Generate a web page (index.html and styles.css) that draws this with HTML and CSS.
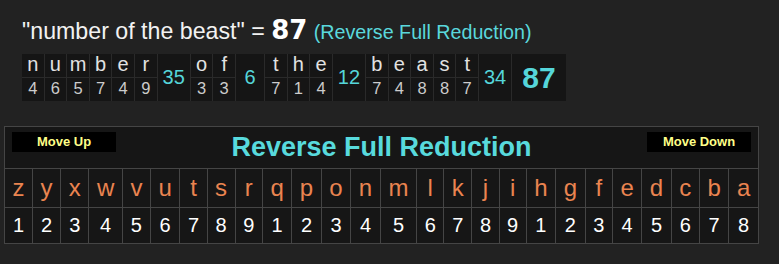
FILE: index.html
```html
<!DOCTYPE html>
<html>
<head>
<meta charset="utf-8">
<link rel="stylesheet" href="styles.css">
</head>
<body>
<div class="summary">
  <div class="phrase"><span class="words">"number of the beast" = </span><span class="big">87</span> <span class="cipher">(Reverse Full Reduction)</span></div>
  <table class="breakdown">
    <tr>
      <td class="l">n</td><td class="l">u</td><td class="l">m</td><td class="l">b</td><td class="l">e</td><td class="l">r</td>
      <td class="sum" rowspan="2">35</td>
      <td class="l">o</td><td class="l">f</td>
      <td class="sum" rowspan="2">6</td>
      <td class="l">t</td><td class="l">h</td><td class="l">e</td>
      <td class="sum" rowspan="2">12</td>
      <td class="l">b</td><td class="l">e</td><td class="l">a</td><td class="l">s</td><td class="l">t</td>
      <td class="sum" rowspan="2">34</td>
      <td class="total" rowspan="2">87</td>
    </tr>
    <tr>
      <td class="v">4</td><td class="v">6</td><td class="v">5</td><td class="v">7</td><td class="v">4</td><td class="v">9</td>
      <td class="v">3</td><td class="v">3</td>
      <td class="v">7</td><td class="v">1</td><td class="v">4</td>
      <td class="v">7</td><td class="v">4</td><td class="v">8</td><td class="v">8</td><td class="v">7</td>
    </tr>
  </table>
</div>
<table class="chart">
  <tr>
    <td class="head" colspan="26">
      <div class="headbar">
        <button class="move left">Move Up</button>
        <span class="title">Reverse Full Reduction</span>
        <button class="move right">Move Down</button>
      </div>
    </td>
  </tr>
  <tr class="letters">
    <td>z</td><td>y</td><td>x</td><td>w</td><td>v</td><td>u</td><td>t</td><td>s</td><td>r</td><td>q</td><td>p</td><td>o</td><td>n</td><td>m</td><td>l</td><td>k</td><td>j</td><td>i</td><td>h</td><td>g</td><td>f</td><td>e</td><td>d</td><td>c</td><td>b</td><td>a</td>
  </tr>
  <tr class="nums">
    <td>1</td><td>2</td><td>3</td><td>4</td><td>5</td><td>6</td><td>7</td><td>8</td><td>9</td><td>1</td><td>2</td><td>3</td><td>4</td><td>5</td><td>6</td><td>7</td><td>8</td><td>9</td><td>1</td><td>2</td><td>3</td><td>4</td><td>5</td><td>6</td><td>7</td><td>8</td>
  </tr>
</table>
</body>
</html>
```

FILE: styles.css
```css
html, body {
  margin: 0;
  padding: 0;
  background: #222222;
  font-family: "Liberation Sans", Arial, sans-serif;
}

.summary {
  padding: 15px 0 0 22px;
}

.phrase {
  line-height: 30px;
  font-size: 23.2px;
  color: #f2f2f2;
  white-space: nowrap;
}

.phrase .big {
  font-family: "DejaVu Sans", "Liberation Sans", sans-serif;
  font-weight: bold;
  font-size: 26px;
  color: #ffffff;
}

.phrase .cipher {
  font-size: 19.7px;
  color: #5ad8dc;
}

.breakdown {
  margin-top: 7px;
  border-collapse: collapse;
  border: hidden;
  background: #151515;
}

.breakdown td {
  border: 1px solid #2a2a2a;
  padding: 0;
  text-align: center;
}

.breakdown .l {
  width: 21.6px;
  font-size: 20px;
  line-height: 20px;
  padding-bottom: 3px;
  color: #e2e2e2;
}

.breakdown .v {
  font-size: 16.5px;
  line-height: 20px;
  padding-bottom: 3px;
  color: #cccccc;
}

.breakdown .sum {
  min-width: 18px;
  padding: 0 5px;
  font-size: 20px;
  color: #55d6da;
}

.breakdown .total {
  padding: 0 10px;
  font-size: 30px;
  font-weight: bold;
  color: #55d6da;
}

.chart {
  margin: 25px 0 0 4px;
  width: 755px;
  border-collapse: collapse;
  background: #161616;
  border: 1px solid #454545;
}

.chart td {
  border: 1px solid #454545;
  padding: 0 7px;
  text-align: center;
}

.chart .head {
  padding: 5px 7px;
}

.headbar {
  display: grid;
  grid-template-columns: 1fr auto 1fr;
  align-items: start;
}

.move {
  width: 104px;
  height: 20px;
  border: none;
  padding: 0;
  background: #000000;
  color: #ffff88;
  font-family: "Liberation Sans", Arial, sans-serif;
  font-weight: bold;
  font-size: 13px;
  line-height: 20px;
}

.move.left {
  justify-self: start;
}

.move.right {
  justify-self: end;
}

.title {
  font-size: 27px;
  line-height: 31px;
  font-weight: bold;
  color: #58dadd;
}

.letters td {
  font-size: 24px;
  line-height: 38px;
  color: #ea8450;
}

.nums td {
  font-size: 20px;
  line-height: 35px;
  color: #ffffff;
}
```
